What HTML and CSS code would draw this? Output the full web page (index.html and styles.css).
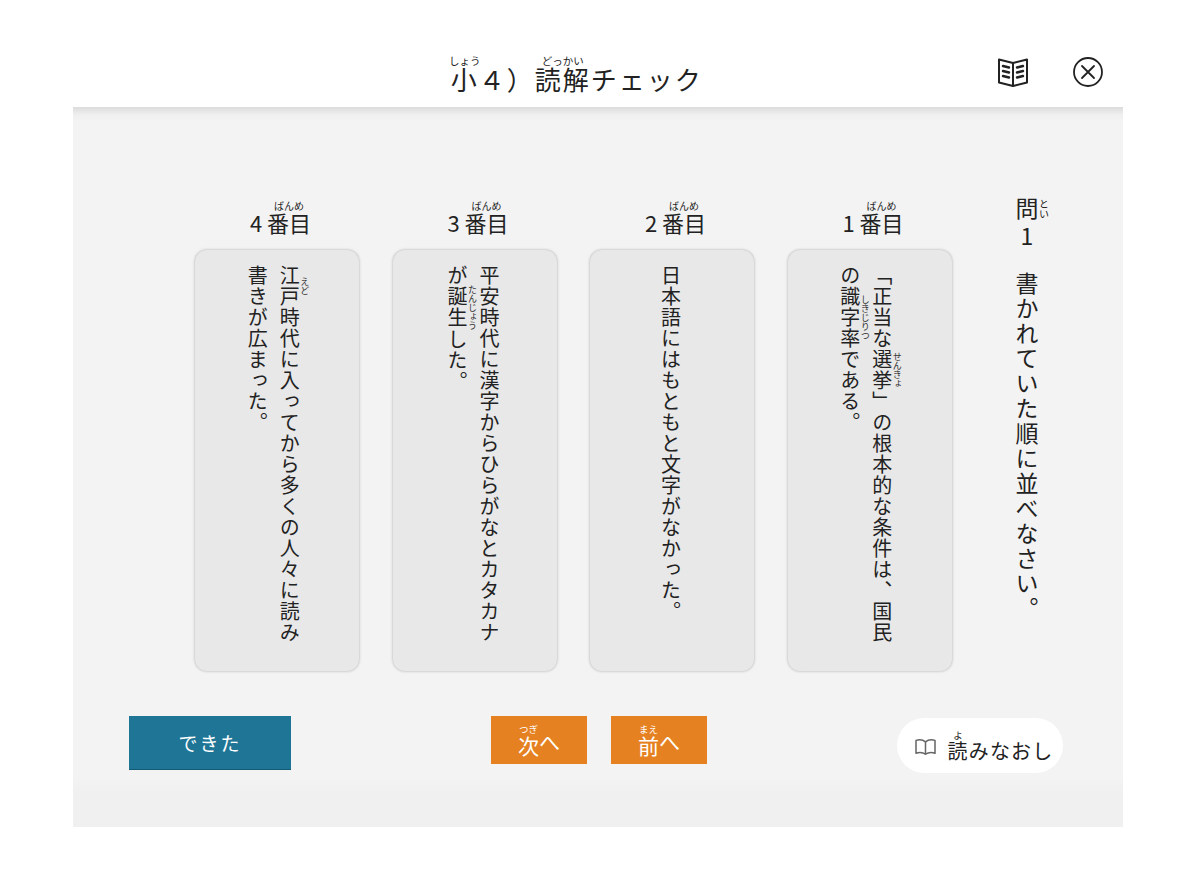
FILE: index.html
```html
<!DOCTYPE html>
<html lang="ja">
<head>
<meta charset="utf-8">
<title>読解チェック</title>
<link rel="stylesheet" href="styles.css">
</head>
<body>
<div class="screen">
  <header class="top">
    <h1 class="title"><ruby>小<rt>しょう</rt></ruby>&#xFF14;&#xFF09;<ruby>読解<rt>どっかい</rt></ruby>チェック</h1>
    <div class="tools">
      <svg class="ico-book" viewBox="0 0 32 32" width="32" height="32" fill="none" stroke="#222" stroke-width="2" stroke-linejoin="round" stroke-linecap="round">
        <path d="M2 3.5 L16 7 L30 3.5 V26.500 L16 30 L2 26.500 Z"/>
        <path d="M16 7 V30"/>
        <path d="M6 10 L12 11.500 M6 15 L12 16.500 M6 20 L12 21.500 M26 10 L20 11.500 M26 15 L20 16.500 M26 20 L20 21.500" stroke-width="2.400"/>
      </svg>
      <svg class="ico-close" viewBox="0 0 30 30" width="30" height="30" fill="none" stroke="#222" stroke-width="1.800" stroke-linecap="round">
        <circle cx="15" cy="15" r="14"/>
        <path d="M9 9 L21 21 M21 9 L9 21"/>
      </svg>
    </div>
  </header>

  <main class="panel">
    <div class="board">
      <section class="col">
        <h2 class="col-head">4 <ruby>番目<rt>ばんめ</rt></ruby></h2>
        <div class="card"><p class="card-text"><ruby>江戸<rt>えど</rt></ruby>時代に入ってから多くの人々に読み<br>書きが広まった。</p></div>
      </section>
      <section class="col">
        <h2 class="col-head">3 <ruby>番目<rt>ばんめ</rt></ruby></h2>
        <div class="card"><p class="card-text">平安時代に漢字からひらがなとカタカナ<br>が<ruby>誕生<rt>たんじょう</rt></ruby>した。</p></div>
      </section>
      <section class="col">
        <h2 class="col-head">2 <ruby>番目<rt>ばんめ</rt></ruby></h2>
        <div class="card"><p class="card-text">日本語にはもともと文字がなかった。</p></div>
      </section>
      <section class="col">
        <h2 class="col-head">1 <ruby>番目<rt>ばんめ</rt></ruby></h2>
        <div class="card"><p class="card-text">「正当な<ruby>選挙<rt>せんきょ</rt></ruby>」の根本的な条件は、国民<br>の<ruby>識字率<rt>しきじりつ</rt></ruby>である。</p></div>
      </section>
      <p class="question"><ruby>問<rt>とい</rt></ruby><span class="upright">1</span><span class="q-gap"></span>書かれていた順に並べなさい。</p>
    </div>

    <div class="actions">
      <button class="btn btn-done">できた</button>
      <div class="nav">
        <button class="btn btn-nav"><ruby>次<rt>つぎ</rt></ruby>へ</button>
        <button class="btn btn-nav"><ruby>前<rt>まえ</rt></ruby>へ</button>
      </div>
      <button class="btn btn-reread">
        <svg viewBox="0 0 24 20" width="23" height="19" fill="none" stroke="#666" stroke-width="1.600" stroke-linejoin="round">
          <path d="M12 4 C9 1.500 5 1.500 2 2.500 V16 C5 15 9 15 12 17 C15 15 19 15 22 16 V2.500 C19 1.500 15 1.500 12 4 Z"/>
          <path d="M12 4 V17"/>
        </svg>
        <span><ruby>読<rt>よ</rt></ruby>みなおし</span>
      </button>
    </div>
  </main>
</div>
</body>
</html>
```

FILE: styles.css
```css
* { box-sizing: border-box; }
html, body { margin: 0; padding: 0; background: #fff; }
body {
  font-family: "Noto Sans CJK JP", "Noto Sans", sans-serif;
  color: #222;
  height: 881px;
  overflow: hidden;
}
ruby { ruby-align: center; }
.screen { width: 1050px; margin-left: 73px; }

.top {
  height: 107px;
  display: flex;
  align-items: flex-start;
  padding-left: 376px;
}
.title {
  margin: 0;
  padding-top: 59px;
  font-size: 26px;
  line-height: 40px;
  font-weight: 400;
  letter-spacing: 2px;
  white-space: nowrap;
}
.title rt { font-size: 10.500px; letter-spacing: 0; line-height: 10px; }
.tools {
  margin-left: auto;
  display: flex;
  align-items: center;
  gap: 44px;
  padding: 56px 20px 0 0;
}

.panel {
  height: 720px;
  background: linear-gradient(#dcdcdc 0, #f0f0f0 8px, #f3f3f3 14px, #f3f3f3 670px, #f0f0f0 685px);
  padding: 90px 0 0 56px;
}
.board { display: flex; align-items: flex-start; padding-left: 66px; height: 519px; }
.col { width: 164px; margin-right: 33.500px; display: flex; flex-direction: column; }
.col-head {
  margin: 0;
  height: 53px;
  padding-top: 10px;
  padding-left: 7px;
  font-size: 22px;
  line-height: 30px;
  font-weight: 400;
  text-align: center;
  white-space: nowrap;
}
.col-head rt { font-size: 10px; line-height: 9px; letter-spacing: 0; }
.card {
  height: 421px;
  background: #e8e8e8;
  border-radius: 12px;
  box-shadow: 0 0 3px rgba(0,0,0,.3);
  display: flex;
  justify-content: center;
  padding: 15px 3px 0 0;
}
.card-text {
  margin: 0;
  writing-mode: vertical-rl;
  font-size: 20px;
  letter-spacing: 1px;
  line-height: 32px;
  white-space: nowrap;
}
.card-text rt { font-size: 9px; line-height: 8px; letter-spacing: 0; color: #333; }
.question {
  margin: 0 0 0 27px;
  writing-mode: vertical-rl;
  font-size: 23px;
  line-height: 30px;
  letter-spacing: 2px;
  white-space: nowrap;
}
.question rt { font-size: 10px; line-height: 9px; letter-spacing: 0; }
.upright { text-orientation: upright; padding-inline-start: 3px; }
.q-gap { display: inline-block; height: 22px; }

.actions { display: flex; align-items: flex-start; }
.btn { border: 0; padding: 0; font-family: inherit; display: flex; align-items: center; justify-content: center; }
.btn-done {
  width: 162px; height: 54px;
  background: #1e7596; color: #fff;
  font-size: 19px; letter-spacing: 2px;
  border-bottom: 1px solid #145a75;
}
.nav { display: flex; gap: 24px; margin-left: 200px; }
.btn-nav {
  width: 96px; height: 48px;
  background: #e58120; color: #fff;
  font-size: 21px; line-height: 26px;
  padding-top: 2px;
}
.btn-nav rt { font-size: 9.500px; line-height: 9px; }
.btn-reread {
  margin: 2px 0 0 190px;
  width: 166px; height: 55px;
  background: #fff;
  border-radius: 28px;
  gap: 10px;
  color: #222;
  font-size: 20px;
  letter-spacing: 1.200px;
  padding: 3px 0 0 8px;
}
.btn-reread rt { font-size: 9.500px; line-height: 9px; letter-spacing: 0; }
```
